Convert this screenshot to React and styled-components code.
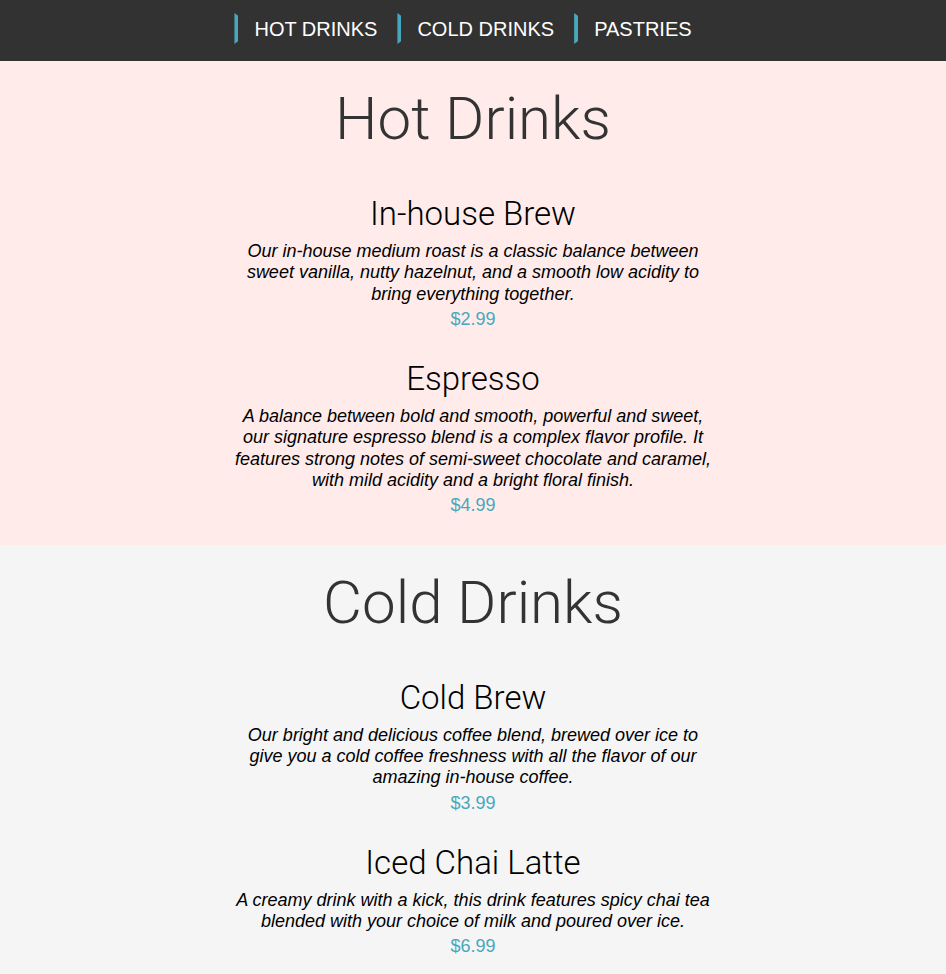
import React from "react";
import styled, { createGlobalStyle } from "styled-components";

const GlobalStyle = createGlobalStyle`
  html, body { margin: 0; padding: 0; }
  body {
    font-family: "Liberation Sans", Arial, sans-serif;
    background: #f5f5f5;
  }
`;

const Nav = styled.nav`
  height: 61px;
  background: #323232;
  display: flex;
  justify-content: center;
  align-items: center;
`;

const NavLink = styled.a`
  display: flex;
  align-items: center;
  color: #ffffff;
  text-decoration: none;
  font-family: "Liberation Sans", Arial, sans-serif;
  font-weight: 400;
  font-size: 20px;
  line-height: 24px;
  padding: 0 20px 4px 0;
  &::before {
    content: "";
    width: 4px;
    height: 31px;
    margin-right: 16px;
    background: #47a8bd;
    clip-path: polygon(0 0, 100% 10%, 100% 90%, 0 100%);
  }
`;

const Section = styled.section`
  background: ${(p) => p.$bg};
  padding: 23px 0 28px;
  display: flex;
  flex-direction: column;
  align-items: center;
`;

const SectionTitle = styled.h2`
  margin: 0 0 41px;
  font-family: Roboto, "Liberation Sans", sans-serif;
  font-weight: 300;
  font-size: 60px;
  line-height: 70px;
  color: #333333;
  text-align: center;
`;

const ItemList = styled.div`
  display: flex;
  flex-direction: column;
  align-items: center;
  gap: 30px;
`;

const Item = styled.article`
  width: 482px;
  display: flex;
  flex-direction: column;
  align-items: center;
  text-align: center;
`;

const ItemName = styled.h3`
  margin: 0 0 8px;
  font-family: Roboto, "Liberation Sans", sans-serif;
  font-weight: 300;
  font-size: 33px;
  line-height: 38px;
  color: #000000;
`;

const Description = styled.p`
  margin: 0 0 4px;
  font-family: "Liberation Sans", Arial, sans-serif;
  font-style: italic;
  font-size: 18px;
  line-height: 21.3px;
  color: #000000;
`;

const Price = styled.span`
  font-family: "Liberation Sans", Arial, sans-serif;
  font-size: 18px;
  line-height: 21.3px;
  color: #47a8bd;
`;

const menu = [
  {
    title: "Hot Drinks",
    bg: "#ffecea",
    items: [
      {
        name: "In-house Brew",
        desc: "Our in-house medium roast is a classic balance between sweet vanilla, nutty hazelnut, and a smooth low acidity to bring everything together.",
        price: "$2.99",
      },
      {
        name: "Espresso",
        desc: "A balance between bold and smooth, powerful and sweet, our signature espresso blend is a complex flavor profile. It features strong notes of semi-sweet chocolate and caramel, with mild acidity and a bright floral finish.",
        price: "$4.99",
      },
    ],
  },
  {
    title: "Cold Drinks",
    bg: "#f5f5f5",
    items: [
      {
        name: "Cold Brew",
        desc: "Our bright and delicious coffee blend, brewed over ice to give you a cold coffee freshness with all the flavor of our amazing in-house coffee.",
        price: "$3.99",
      },
      {
        name: "Iced Chai Latte",
        desc: "A creamy drink with a kick, this drink features spicy chai tea blended with your choice of milk and poured over ice.",
        price: "$6.99",
      },
    ],
  },
];

export default function App() {
  return (
    <>
      <GlobalStyle />
      <Nav>
        <NavLink href="#hot">HOT DRINKS</NavLink>
        <NavLink href="#cold">COLD DRINKS</NavLink>
        <NavLink href="#pastries">PASTRIES</NavLink>
      </Nav>
      {menu.map((section) => (
        <Section key={section.title} $bg={section.bg}>
          <SectionTitle>{section.title}</SectionTitle>
          <ItemList>
            {section.items.map((item) => (
              <Item key={item.name}>
                <ItemName>{item.name}</ItemName>
                <Description>{item.desc}</Description>
                <Price>{item.price}</Price>
              </Item>
            ))}
          </ItemList>
        </Section>
      ))}
    </>
  );
}
